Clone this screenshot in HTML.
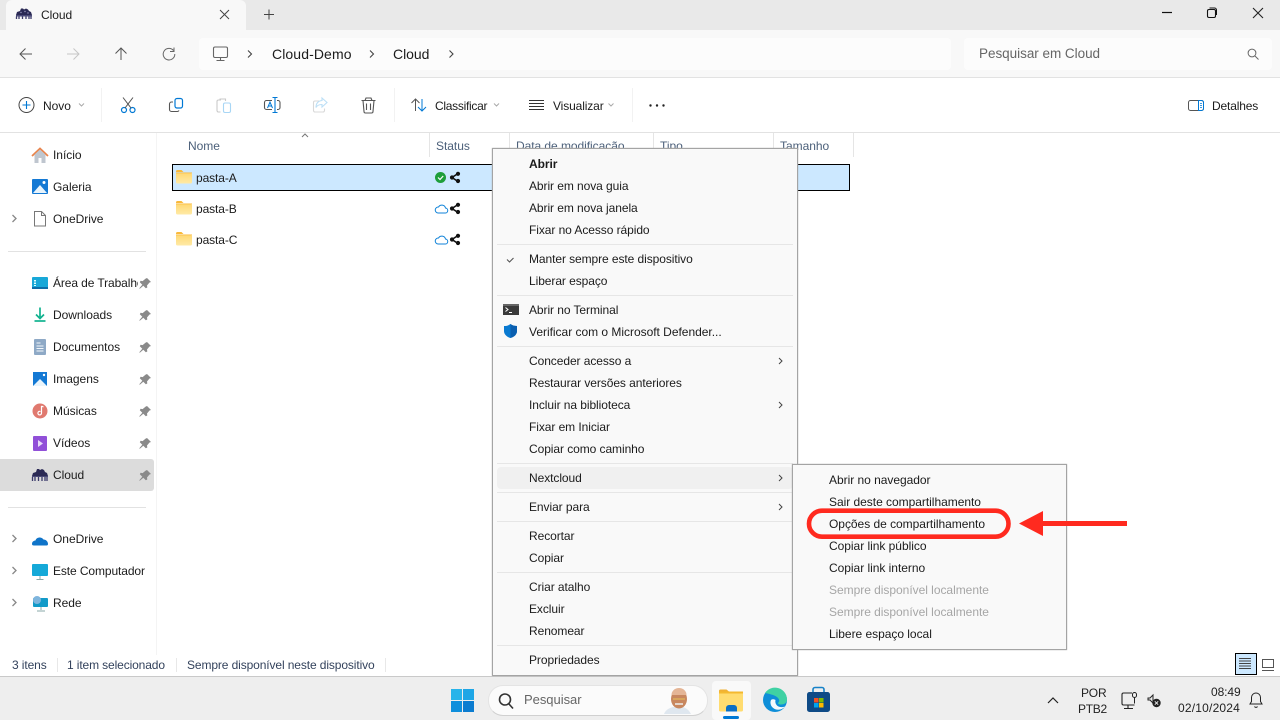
<!DOCTYPE html>
<html lang="pt-BR"><head><meta charset="utf-8"><title>Cloud</title>
<style>
html,body{margin:0;padding:0;width:1280px;height:720px;overflow:hidden;background:#fff}
body{position:relative;font:12px/16px "Liberation Sans",sans-serif;color:#1b1b1b}
.b{position:absolute}
.t{position:absolute;white-space:nowrap;letter-spacing:-.03px}
.h{color:#4c607a}.s{color:#33425c;letter-spacing:-.1px}.d{color:#a6a6a6}
.m{letter-spacing:-.07px}
svg{position:absolute;left:0;top:0}
</style></head><body>
<div class="b" style="left:0;top:0;width:1280px;height:30px;background:#e9e9e9"></div>
<div class="b" style="left:6px;top:0;width:240px;height:30px;background:#f8f8f8;border-radius:6px 6px 0 0"></div>
<div class="b" style="left:0;top:30px;width:1280px;height:47px;background:#f8f8f8;border-bottom:1px solid #e2e2e2"></div>
<div class="b" style="left:199px;top:38px;width:752px;height:32px;background:#fcfcfc;border-radius:4px"></div>
<div class="b" style="left:964px;top:38px;width:308px;height:32px;background:#fcfcfc;border-radius:4px"></div>
<div class="b" style="left:0;top:132px;width:1280px;height:1px;background:#e2e2e2"></div>
<div class="b" style="left:156px;top:133px;width:1px;height:522px;background:#f4f4f4"></div>
<div class="b" style="left:0;top:459px;width:154px;height:32px;background:#dcdcdc;border-radius:0 3px 3px 0"></div>
<div class="b" style="left:8px;top:251px;width:138px;height:1px;background:#e2e2e2"></div>
<div class="b" style="left:8px;top:507px;width:138px;height:1px;background:#e2e2e2"></div>
<div class="b" style="left:429px;top:133px;width:1px;height:24px;background:#e5e5e5"></div>
<div class="b" style="left:509px;top:133px;width:1px;height:24px;background:#e5e5e5"></div>
<div class="b" style="left:653px;top:133px;width:1px;height:24px;background:#e5e5e5"></div>
<div class="b" style="left:773px;top:133px;width:1px;height:24px;background:#e5e5e5"></div>
<div class="b" style="left:853px;top:133px;width:1px;height:24px;background:#e5e5e5"></div>
<div class="b" style="left:172px;top:164px;width:676px;height:25px;background:#cce8ff;border:1px solid #000"></div>
<div class="b" style="left:0;top:676px;width:1280px;height:44px;background:#eee;border-top:1px solid #c9c9c9;box-sizing:border-box"></div>
<div class="b" style="left:712px;top:681px;width:39px;height:39px;background:#f9f9f9;border-radius:4px"></div>
<div class="b" style="left:723px;top:716px;width:16px;height:3px;background:#0078d4;border-radius:2px"></div>
<div class="b" style="left:488px;top:685px;width:218px;height:29px;background:#fbfbfb;border-radius:15px;border:1px solid #e4e4e4;border-bottom-color:#d0d0d0"></div>
<div class="b" style="left:1235px;top:653px;width:20px;height:20px;background:#cce8ff;border:1px solid #000"></div>

<span class="t" style="left:41px;top:7px;font-size:12px">Cloud</span>
<span class="t" style="left:272px;top:46px;font-size:14px;letter-spacing:.1px;line-height:16px">Cloud-Demo</span>
<span class="t" style="left:393px;top:46px;font-size:14px;line-height:16px">Cloud</span>
<span class="t" style="left:979px;top:46px;font-size:13.5px;color:#666;line-height:16px">Pesquisar em Cloud</span>
<span class="t" style="left:43px;top:98px">Novo</span>
<span class="t" style="left:435px;top:98px;letter-spacing:-.28px">Classificar</span>
<span class="t" style="left:553px;top:98px;letter-spacing:-.12px">Visualizar</span>
<span class="t" style="left:1212px;top:98px;letter-spacing:-.15px">Detalhes</span>

<span class="t h" style="left:188px;top:138px">Nome</span>
<span class="t h" style="left:436px;top:138px">Status</span>
<span class="t h" style="left:516px;top:138px;letter-spacing:-.05px">Data de modificação</span>
<span class="t h" style="left:660px;top:138px">Tipo</span>
<span class="t h" style="left:780px;top:138px">Tamanho</span>
<span class="t" style="left:196px;top:170px;letter-spacing:-.1px">pasta-A</span>
<span class="t" style="left:196px;top:201px;letter-spacing:-.1px">pasta-B</span>
<span class="t" style="left:196px;top:232px;letter-spacing:-.1px">pasta-C</span>

<span class="t" style="left:53px;top:147px">Início</span>
<span class="t" style="left:53px;top:179px">Galeria</span>
<span class="t" style="left:53px;top:211px">OneDrive</span>
<span class="t" style="left:53px;top:275px;width:85px;overflow:hidden;letter-spacing:-.1px">Área de Trabalho</span>
<span class="t" style="left:53px;top:307px">Downloads</span>
<span class="t" style="left:53px;top:339px">Documentos</span>
<span class="t" style="left:53px;top:371px">Imagens</span>
<span class="t" style="left:53px;top:403px">Músicas</span>
<span class="t" style="left:53px;top:435px">Vídeos</span>
<span class="t" style="left:53px;top:467px">Cloud</span>
<span class="t" style="left:53px;top:531px">OneDrive</span>
<span class="t" style="left:53px;top:563px;letter-spacing:-.1px">Este Computador</span>
<span class="t" style="left:53px;top:595px">Rede</span>

<span class="t s" style="left:12px;top:657px">3 itens</span>
<span class="t s" style="left:67px;top:657px;letter-spacing:-.12px">1 item selecionado</span>
<span class="t s" style="left:187px;top:657px;letter-spacing:-.11px">Sempre disponível neste dispositivo</span>
<div class="b" style="left:57px;top:658px;width:1px;height:14px;background:#e8e8e8"></div>
<div class="b" style="left:176px;top:658px;width:1px;height:14px;background:#e8e8e8"></div>
<div class="b" style="left:385px;top:658px;width:1px;height:14px;background:#e8e8e8"></div>

<span class="t" style="left:524px;top:692px;font-size:13px;color:#666">Pesquisar</span>
<span class="t" style="left:1081px;top:685px;color:#222;letter-spacing:-.2px">POR</span>
<span class="t" style="left:1078px;top:701px;color:#222;letter-spacing:-.3px">PTB2</span>
<span class="t" style="left:1211px;top:684px;color:#222;letter-spacing:-.1px">08:49</span>
<span class="t" style="left:1178px;top:700px;color:#222;letter-spacing:.2px">02/10/2024</span>

<div class="b" style="left:492px;top:148px;width:304px;height:526px;background:#f9f9f9;border:1px solid #a4a4a4;box-shadow:0 0 1px #aaa"></div>
<div class="b" style="left:497px;top:467px;width:296px;height:22px;background:#f0f0f0;border-radius:4px"></div>
<div class="b" style="left:497px;top:244px;width:296px;height:1px;background:#e6e6e6"></div>
<div class="b" style="left:497px;top:295px;width:296px;height:1px;background:#e6e6e6"></div>
<div class="b" style="left:497px;top:346px;width:296px;height:1px;background:#e6e6e6"></div>
<div class="b" style="left:497px;top:463px;width:296px;height:1px;background:#e6e6e6"></div>
<div class="b" style="left:497px;top:492px;width:296px;height:1px;background:#e6e6e6"></div>
<div class="b" style="left:497px;top:521px;width:296px;height:1px;background:#e6e6e6"></div>
<div class="b" style="left:497px;top:572px;width:296px;height:1px;background:#e6e6e6"></div>
<div class="b" style="left:497px;top:645px;width:296px;height:1px;background:#e6e6e6"></div>
<span class="t m" style="left:529px;top:156px;font-weight:bold">Abrir</span>
<span class="t m" style="left:529px;top:178px">Abrir em nova guia</span>
<span class="t m" style="left:529px;top:200px">Abrir em nova janela</span>
<span class="t m" style="left:529px;top:222px">Fixar no Acesso rápido</span>
<span class="t m" style="left:529px;top:251px;letter-spacing:-.08px">Manter sempre este dispositivo</span>
<span class="t m" style="left:529px;top:273px">Liberar espaço</span>
<span class="t m" style="left:529px;top:302px">Abrir no Terminal</span>
<span class="t m" style="left:529px;top:324px;letter-spacing:-.02px">Verificar com o Microsoft Defender...</span>
<span class="t m" style="left:529px;top:353px">Conceder acesso a</span>
<span class="t m" style="left:529px;top:375px">Restaurar versões anteriores</span>
<span class="t m" style="left:529px;top:397px">Incluir na biblioteca</span>
<span class="t m" style="left:529px;top:419px">Fixar em Iniciar</span>
<span class="t m" style="left:529px;top:441px">Copiar como caminho</span>
<span class="t m" style="left:529px;top:470px">Nextcloud</span>
<span class="t m" style="left:529px;top:499px">Enviar para</span>
<span class="t m" style="left:529px;top:528px">Recortar</span>
<span class="t m" style="left:529px;top:550px">Copiar</span>
<span class="t m" style="left:529px;top:579px">Criar atalho</span>
<span class="t m" style="left:529px;top:601px">Excluir</span>
<span class="t m" style="left:529px;top:623px">Renomear</span>
<span class="t m" style="left:529px;top:652px">Propriedades</span>

<div class="b" style="left:792px;top:464px;width:273px;height:184px;background:#f9f9f9;border:1px solid #a4a4a4;box-shadow:0 0 1px #aaa"></div>
<span class="t" style="left:829px;top:472px">Abrir no navegador</span>
<span class="t" style="left:829px;top:494px">Sair deste compartilhamento</span>
<span class="t" style="left:829px;top:516px">Opções de compartilhamento</span>
<span class="t" style="left:829px;top:538px">Copiar link público</span>
<span class="t" style="left:829px;top:560px">Copiar link interno</span>
<span class="t d" style="left:829px;top:582px">Sempre disponível localmente</span>
<span class="t d" style="left:829px;top:604px">Sempre disponível localmente</span>
<span class="t" style="left:829px;top:626px">Libere espaço local</span>

<svg width="1280" height="720" viewBox="0 0 1280 720" fill="none">
<defs><linearGradient id="fg" x1="0" y1="0" x2="0" y2="1"><stop offset="0" stop-color="#ffd873"/><stop offset="1" stop-color="#ffeaa6"/></linearGradient></defs>
<!-- spider logo tab -->
<path d="M16 15l1-3 3-1 1-2.500h2l1 1 2-1 2 1 1 1.500 2 1 1 3z" fill="#2b2a55"/>
<path d="M16 15h16v1.500H16z" fill="#4a4a78"/>
<path d="M16.500 16.500v2.500M19 16.500v2.500M22.500 16.500v2.500M26 16.500v2.500M29 16.500v2.500M31 16.500v2.500" stroke="#3b3a6a" stroke-width="1.300"/>
<circle cx="21" cy="12.500" r=".7" fill="#9a9ac0"/><circle cx="25" cy="11.500" r=".7" fill="#9a9ac0"/><circle cx="28" cy="13" r=".7" fill="#9a9ac0"/>
<g stroke="#444" stroke-width="1"><path d="M220 10l9 9M229 10l-9 9"/></g>
<path d="M269 9.500v10M264 14.500h10" stroke="#444"/>
<!-- window controls -->
<path d="M1162 12.500h10" stroke="#111" stroke-width="1.200"/>
<rect x="1207.500" y="9.500" width="8" height="8" rx="1.500" stroke="#111" stroke-width="1.100"/><path d="M1209.500 8h5a2 2 0 0 1 2 2v5" stroke="#111"/>
<path d="M1253 8l10 10M1263 8l-10 10" stroke="#222" stroke-width="1.100"/>
<!-- nav -->
<path d="M32 54H20M25.500 48.500L20 54l5.500 5.500" stroke="#555" stroke-width="1"/>
<path d="M67 54h12M73.500 48.500L79 54l-5.500 5.500" stroke="#c6c6c6" stroke-width="1"/>
<path d="M121 60V48M115.500 53.500L121 48l5.500 5.500" stroke="#555" stroke-width="1"/>
<path d="M173.500 50.500a5.800 5.800 0 1 0 1.300 3.500M174 47.500v4h-4" stroke="#666" stroke-width="1"/>
<rect x="213.500" y="47" width="14" height="10.500" rx="1.500" stroke="#666" stroke-width="1.100"/><path d="M220.500 57.500v2.500M216.500 60.500h8" stroke="#666" stroke-width="1.100"/>
<path d="M248 50.500l3.500 3.500-3.500 3.500M370 50.500l3.500 3.500-3.500 3.500M449.500 50.500l3.500 3.500-3.500 3.500" stroke="#444" stroke-width="1.100"/>
<circle cx="1252" cy="53" r="3.900" stroke="#666" stroke-width="1"/><path d="M1255 56l3.500 3.500" stroke="#666" stroke-width="1"/>
<!-- toolbar -->
<circle cx="26.500" cy="105" r="7.500" stroke="#444" stroke-width="1"/><path d="M26.500 101v8M22.500 105h8" stroke="#0078d4" stroke-width="1.100"/>
<path d="M79 103.500l2.500 2.500 2.500-2.500" stroke="#aaa"/>
<path d="M101.500 88v34M394.500 88v34M632.500 88v34" stroke="#f2f2f2"/>
<circle cx="124" cy="110" r="2.500" stroke="#0078d4" stroke-width="1.200"/><circle cx="132.500" cy="110" r="2.500" stroke="#0078d4" stroke-width="1.200"/>
<path d="M123 97.500l8 10.500M133 97.500l-8 10.500" stroke="#555" stroke-width="1"/>
<rect x="175" y="98.500" width="7.500" height="9.500" rx="2" stroke="#0078d4" stroke-width="1.200"/><path d="M173 102h-1.500a2 2 0 0 0-2 2v5.500a2 2 0 0 0 2 2h6a2 2 0 0 0 1.500-1" stroke="#555" stroke-width="1.100"/>
<path d="M221 100h-2.500a1.500 1.500 0 0 0-1.500 1.500v9a1.500 1.500 0 0 0 1.500 1.500h2M219.500 99h6v2" stroke="#c9c9c9" stroke-width="1.100"/><rect x="223.500" y="103" width="7" height="9.500" rx="1.500" stroke="#a8d6f5" stroke-width="1.100"/>
<path d="M272 100.500h-5.500a2 2 0 0 0-2 2v5a2 2 0 0 0 2 2h5.500M277 100.500h1a2 2 0 0 1 2 2v5a2 2 0 0 1-2 2h-1" stroke="#555" stroke-width="1.100"/>
<path d="M272.500 97.500h5M272.500 112.500h5M275 97.500v15" stroke="#0078d4" stroke-width="1.100"/><path d="M267.500 108l2.500-6 2.500 6M268.500 106h3" stroke="#0078d4" stroke-width="1"/>
<path d="M319 101h-4a1.500 1.500 0 0 0-1.500 1.500v8a1.500 1.500 0 0 0 1.500 1.500h8a1.500 1.500 0 0 0 1.500-1.500v-2" stroke="#d8d8d8" stroke-width="1.100"/><path d="M322 98l5 4.500-5 4.500v-2.500c-3 0-5 1-6 3 0-4 2-6.500 6-7z" stroke="#bcdff6" stroke-width="1.100"/>
<path d="M361.500 100.500h14M365 100.500l1-2.500h5l1 2.500M363 100.500l1 11a1.500 1.500 0 0 0 1.500 1.500h6a1.500 1.500 0 0 0 1.500-1.500l1-11M366.500 103.500v6.500M370.500 103.500v6.500" stroke="#555" stroke-width="1.100"/>
<path d="M415.500 111V99M411.500 103l4-4 4 4" stroke="#555" stroke-width="1"/><path d="M422 99v12M418 107l4 4 4-4" stroke="#0078d4" stroke-width="1"/>
<path d="M494 103.500l2.500 2.500 2.500-2.500M608.500 103.500l2.500 2.500 2.500-2.500" stroke="#aaa"/>
<path d="M529 100.500h15M529 103.500h15M529 106.500h15M529 109.500h15" stroke="#333" stroke-width="1"/>
<circle cx="650.500" cy="105.500" r="1.200" fill="#222"/><circle cx="657" cy="105.500" r="1.200" fill="#222"/><circle cx="663.500" cy="105.500" r="1.200" fill="#222"/>
<rect x="1188.500" y="100.500" width="15" height="10" rx="2" stroke="#555"/><path d="M1198.500 100.500h3a2 2 0 0 1 2 2v6a2 2 0 0 1-2 2h-3z" stroke="#0078d4"/><path d="M1200 103.500h2M1200 105.500h2M1200 107.500h2" stroke="#0078d4" stroke-width=".8"/>
<path d="M302 137l3-3 3 3" stroke="#777"/>
<!-- folders -->
<path d="M176 171.500a1.500 1.500 0 0 1 1.500-1.500h4l2 2h-7.500z" fill="#f9b93b"/><path d="M176 173h14.500a1.500 1.500 0 0 1 1.500 1.500V182a1.500 1.500 0 0 1-1.500 1.500h-13a1.500 1.500 0 0 1-1.500-1.500z" fill="url(#fg)"/><path d="M176 172.500h16v.8h-16z" fill="#f9b93b"/>
<path d="M176 202.500a1.500 1.500 0 0 1 1.500-1.500h4l2 2h-7.500z" fill="#f9b93b"/><path d="M176 204h14.500a1.500 1.500 0 0 1 1.500 1.500V213a1.500 1.500 0 0 1-1.500 1.500h-13a1.500 1.500 0 0 1-1.500-1.500z" fill="url(#fg)"/><path d="M176 203.500h16v.8h-16z" fill="#f9b93b"/>
<path d="M176 233.500a1.500 1.500 0 0 1 1.500-1.500h4l2 2h-7.500z" fill="#f9b93b"/><path d="M176 235h14.500a1.500 1.500 0 0 1 1.500 1.500V244a1.500 1.500 0 0 1-1.500 1.500h-13a1.500 1.500 0 0 1-1.500-1.500z" fill="url(#fg)"/><path d="M176 234.500h16v.8h-16z" fill="#f9b93b"/>
<!-- status -->
<circle cx="440.500" cy="177.500" r="5.500" fill="#1e9e3a"/><path d="M438 177.500l2 2 3.200-3.500" stroke="#fff" stroke-width="1.200"/>
<path d="M437 213.500h7a2.500 2.500 0 0 0 .5-5 3.800 3.800 0 0 0-7-1 3 3 0 0 0-.5 6z" stroke="#0f82d8" stroke-width="1" transform="translate(1 -.5)"/>
<path d="M437 244.500h7a2.500 2.500 0 0 0 .5-5 3.800 3.800 0 0 0-7-1 3 3 0 0 0-.5 6z" stroke="#0f82d8" stroke-width="1" transform="translate(1 -.5)"/>
<g stroke="#111" stroke-width="1.600" fill="#111">
<path d="M458 173.500l-6 4 6 4" fill="none"/><circle cx="458" cy="173.800" r="1.300"/><circle cx="458" cy="181" r="1.300"/><circle cx="452" cy="177.500" r="1.300"/>
<path d="M458 204.500l-6 4 6 4" fill="none"/><circle cx="458" cy="204.800" r="1.300"/><circle cx="458" cy="212" r="1.300"/><circle cx="452" cy="208.500" r="1.300"/>
<path d="M458 235.500l-6 4 6 4" fill="none"/><circle cx="458" cy="235.800" r="1.300"/><circle cx="458" cy="243" r="1.300"/><circle cx="452" cy="239.500" r="1.300"/>
</g>
<!-- sidebar chevrons -->
<path d="M12.500 215l3.500 3.500-3.500 3.500M12.500 535l3.500 3.500-3.500 3.500M12.500 567l3.500 3.500-3.500 3.500M12.500 599l3.500 3.500-3.500 3.500" stroke="#888" stroke-width="1.300"/>
<!-- sidebar icons -->
<path d="M32 156l8-7.500 8 7.500" stroke="#e9834a" stroke-width="1.800"/><path d="M34.500 154.500l5.500-5 5.500 5V163h-4v-5h-3v5h-4z" fill="#bfc6cf"/>
<rect x="32" y="179" width="16" height="15" rx="1" fill="#1479d4"/><path d="M33 193l7-8 7 8z" fill="#e8f4fc"/><circle cx="44" cy="182.500" r="1.500" fill="#fff"/>
<path d="M34.500 211.500h7l4 4V226h-11z" fill="#fff" stroke="#777"/><path d="M41.500 211.500v4h4" stroke="#777"/>
<rect x="32" y="277" width="16" height="12" rx="1" fill="#18a8d8"/><path d="M32 287h16v2H32z" fill="#0d6ea8"/><path d="M35 280v6" stroke="#dff" stroke-width="2" stroke-dasharray="1.500 1"/>
<path d="M40 307.500v11M36 314.500l4 4 4-4" stroke="#11b28f" stroke-width="1.700"/><path d="M34.500 321h11" stroke="#11b28f" stroke-width="1.700"/>
<rect x="34" y="339" width="12" height="16" rx="1" fill="#8ea9c6"/><path d="M36.500 343h4M36.500 346h7M36.500 348.500h7M36.500 351h7" stroke="#f2f6fa"/>
<rect x="33" y="372" width="14" height="14" fill="#1479d4"/><path d="M33 386l7-7 7 7z" fill="#eaf5fc"/><circle cx="44" cy="375" r="1.200" fill="#fff"/>
<circle cx="40" cy="411" r="7.500" fill="#e0796f"/><path d="M41.500 406v7a1.800 1.800 0 1 1-1-1.500M41.500 406l2 1" stroke="#fff" stroke-width="1.200"/>
<rect x="33" y="436" width="14" height="15" rx="1" fill="#9150d8"/><path d="M38 440l5 3.500-5 3.500z" fill="#e7dbf8"/>
<path d="M32 476l1-3 3-1 1-3h2l1 1 2-1 2 1 1 2 2 1 1 3z" fill="#2b2a55"/>
<path d="M32.500 477v4M35 477v4M38.500 477v4M42 477v4M45 477v4M47 477v4" stroke="#3b3a6a" stroke-width="1.300"/><path d="M32 476.500h16" stroke="#4a4a78"/>
<path d="M32 544c0-2.500 2-3.500 3.500-3.500 1-3.500 6-4 8-1 2.500 0 4.500 2 4.500 4.500 0 1-.5 1.500-1.500 1.500H34c-1.500 0-2-.5-2-1.500z" fill="#0f74c9"/>
<rect x="32" y="564" width="16" height="12" rx="1" fill="#15a9d8"/><path d="M40 576v3M36.500 579.500h7" stroke="#8aa"/>
<rect x="33" y="598" width="15" height="9" rx="1" fill="#129ac8"/><circle cx="37" cy="600" r="4" fill="#7fb5dd"/><path d="M41 607v3M37 611h8" stroke="#8aa"/>
<!-- pins -->
<g fill="#8a8a8a">
<path d="M147 278l4 4-1.500.5-2.500 3 .3 2-1.500.8-2.500-2.500-3.500 3-.5-.5 3-3.500-2.500-2.500.8-1.500 2 .3 3-2.500z"/>
<path d="M147 310l4 4-1.500.5-2.500 3 .3 2-1.500.8-2.500-2.500-3.500 3-.5-.5 3-3.500-2.500-2.500.8-1.500 2 .3 3-2.500z"/>
<path d="M147 342l4 4-1.500.5-2.500 3 .3 2-1.500.8-2.500-2.500-3.500 3-.5-.5 3-3.500-2.500-2.500.8-1.500 2 .3 3-2.500z"/>
<path d="M147 374l4 4-1.500.5-2.500 3 .3 2-1.500.8-2.500-2.500-3.500 3-.5-.5 3-3.500-2.500-2.500.8-1.500 2 .3 3-2.500z"/>
<path d="M147 406l4 4-1.500.5-2.500 3 .3 2-1.500.8-2.500-2.500-3.500 3-.5-.5 3-3.500-2.500-2.500.8-1.500 2 .3 3-2.500z"/>
<path d="M147 438l4 4-1.500.5-2.500 3 .3 2-1.500.8-2.500-2.500-3.500 3-.5-.5 3-3.500-2.500-2.500.8-1.500 2 .3 3-2.500z"/>
<path d="M147 470l4 4-1.500.5-2.500 3 .3 2-1.500.8-2.500-2.500-3.500 3-.5-.5 3-3.500-2.500-2.500.8-1.500 2 .3 3-2.500z"/></g>
<!-- context icons -->
<path d="M507 259.500l2.500 2.500 4-4" stroke="#555" stroke-width="1.100"/>
<rect x="503" y="304" width="16" height="11" fill="#3a3a3a"/><rect x="503" y="304" width="16" height="2" fill="#666"/><path d="M505.500 307.500l2.500 2-2.500 2" stroke="#fff"/><path d="M509 312.500h3" stroke="#fff"/>
<path d="M510.500 324c2 1.500 4 2 6.500 2v5c0 3.500-3 6-6.500 7-3.500-1-6.500-3.500-6.500-7v-5c2.500 0 4.500-.5 6.500-2z" fill="#0a7ad1"/><path d="M510.500 324c2 1.500 4 2 6.500 2v5c0 3.500-3 6-6.500 7z" fill="#0a5fb0"/>
<path d="M779 358l3 3-3 3M779 402l3 3-3 3M779 475l3 3-3 3M779 504l3 3-3 3" stroke="#444" stroke-width="1"/>
<!-- red annotation -->
<rect x="809" y="510.700" width="199.500" height="26" rx="13" fill="none" stroke="#ff2a1f" stroke-width="4.600"/>
<path d="M1019 523.500l24-12.500v25z" fill="#ff2a1f"/><rect x="1040" y="521" width="87" height="5" fill="#ff2a1f"/>
<!-- status view toggles -->
<path d="M1239 658.500h12M1239 661h12M1239 663.500h12M1239 666h12M1239 668.500h12" stroke="#444" stroke-width=".9"/>
<rect x="1262.500" y="659.500" width="11" height="8" stroke="#555"/><path d="M1262 670.500h12" stroke="#555"/>
<!-- taskbar -->
<rect x="451" y="689" width="11" height="11" fill="#27b4ea"/><rect x="463" y="689" width="11" height="11" fill="#1ea6e6"/><rect x="451" y="701" width="11" height="11" fill="#0f8fdc"/><rect x="463" y="701" width="11" height="11" fill="#0b7cd0"/>
<circle cx="505" cy="699.500" r="5.500" stroke="#333" stroke-width="1.600"/><path d="M509 704l4 4.500" stroke="#333" stroke-width="1.600"/>
<path d="M664 714c2-5 6-6 9-7l10 0c3 1 6 3 8 7z" fill="#dfe7ef"/><ellipse cx="679" cy="699" rx="8" ry="9.500" fill="#c8875f"/><path d="M671.500 695a7.500 7 0 0 1 15 0z" fill="#e4b596"/><path d="M673 699h12" stroke="#e9c35a"/><path d="M675 704h8" stroke="#eee" stroke-width="1.500"/>
<path d="M719 691a1.500 1.500 0 0 1 1.500-1.500h6l3 2.500H719z" fill="#f0b134"/><path d="M719 692h24v18a1.500 1.500 0 0 1-1.500 1.500h-21a1.500 1.500 0 0 1-1.500-1.500z" fill="#ffdc70"/><rect x="719" y="691.500" width="24" height="2" fill="#f4b92f"/><path d="M726 711.500v-3.500a3 3 0 0 1 3-3h5a3 3 0 0 1 3 3v3.500z" fill="#0a6fc6"/>
<circle cx="775" cy="700" r="12" fill="#0e8ed8"/>
<path d="M765 693a12 12 0 0 1 22 6.500c0 3.500-3 5-6 5-1.500 0-3-.5-3-1.500 1-1 1.500-2 1-3.500-1.500-4-9-5.500-14-6.500z" fill="#3fd1a3"/>
<path d="M771 700c-1.500 3 0 8 5 9.500 3.500.8 7-.5 9-3-3 1-6 .8-8-1-1.500-1.500-2-3.500-1.500-5.500-1.500-1-3.500-1-4.500 0z" fill="#f4f9fc"/>
<rect x="807" y="692" width="23" height="20" rx="2.500" fill="#0e4a86"/><path d="M813 692v-2.500a2 2 0 0 1 2-2h7a2 2 0 0 1 2 2V692" stroke="#1782c8" stroke-width="1.600"/><rect x="814" y="698" width="4.500" height="4.500" fill="#f25022"/><rect x="819" y="698" width="4.500" height="4.500" fill="#7fba00"/><rect x="814" y="703" width="4.500" height="4.500" fill="#00a4ef"/><rect x="819" y="703" width="4.500" height="4.500" fill="#ffb900"/>
<path d="M1048 703l5-5 5 5" stroke="#222" stroke-width="1.200"/>
<path d="M1132 693h-8.500a1.500 1.500 0 0 0-1.500 1.500v9a1.500 1.500 0 0 0 1.500 1.500h11M1128 705v3M1124 708.500h9" stroke="#222" stroke-width="1.100"/><rect x="1132.500" y="692.500" width="4" height="5" rx="2" stroke="#222"/><path d="M1134.500 697.500v6" stroke="#222"/>
<path d="M1148 698h2l3-3v8l-3-3h-2z" stroke="#222"/><circle cx="1156.500" cy="703" r="4.200" fill="#222"/><path d="M1154.800 701.300l3.400 3.400M1158.200 701.300l-3.400 3.400" stroke="#eee" stroke-width=".9"/>
<path d="M1250 704h12l-1.500-2.500v-4a4.500 4.500 0 0 0-9 0v4zM1254.500 706.500a1.700 1.700 0 0 0 3 0" stroke="#222"/>
</svg>
</body></html>
